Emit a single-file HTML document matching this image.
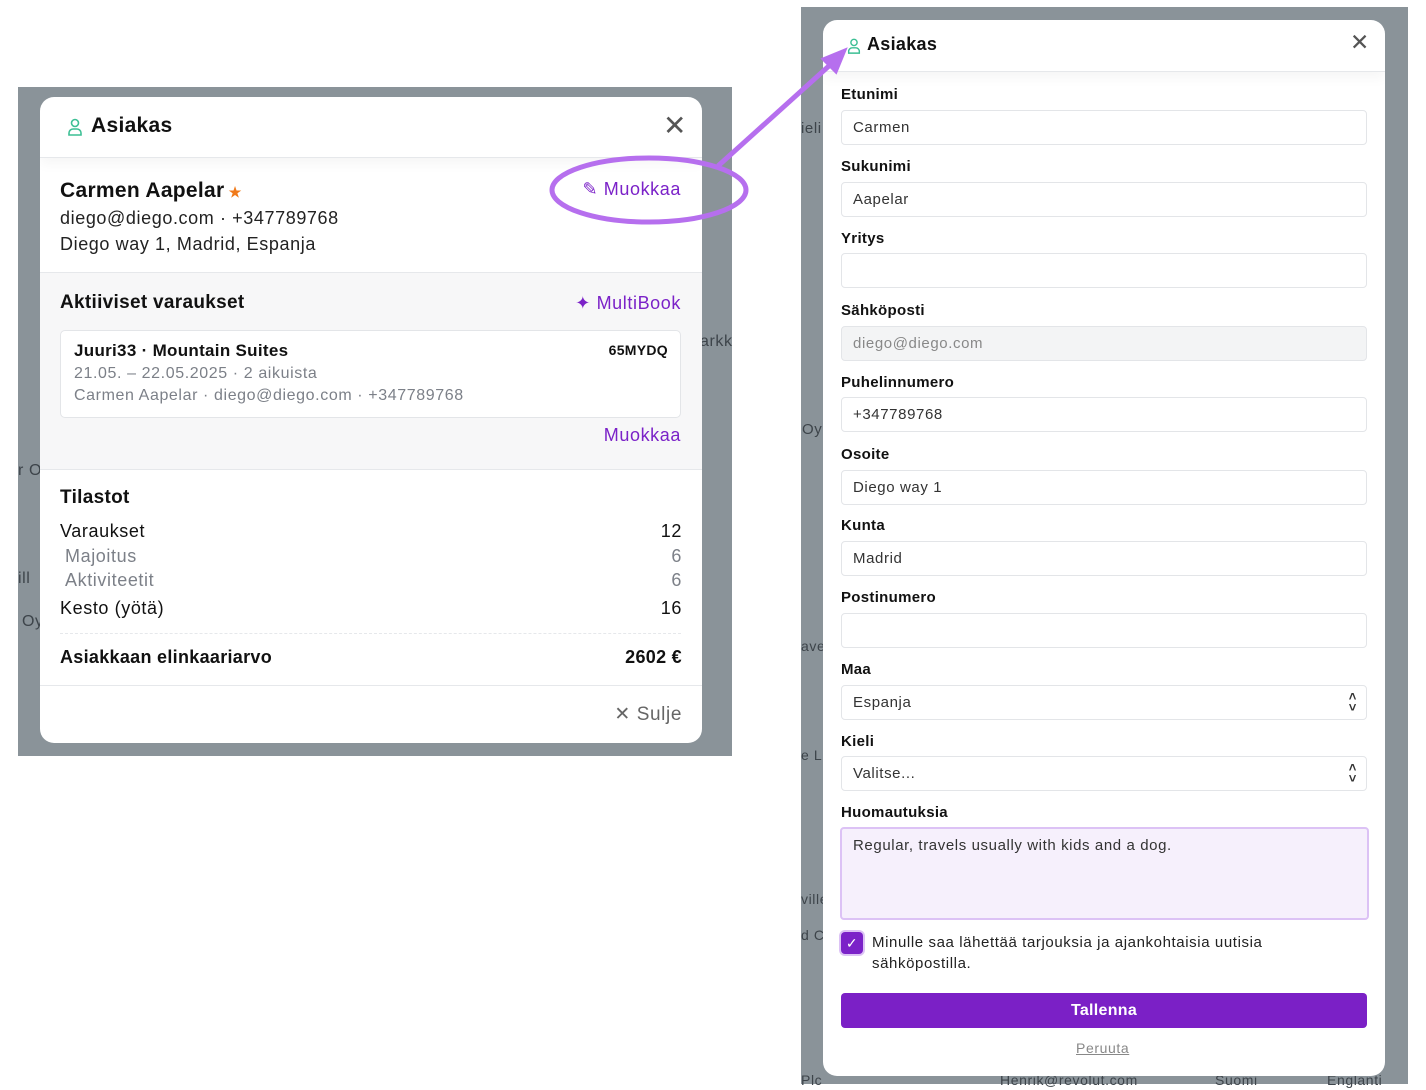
<!DOCTYPE html>
<html><head><meta charset="utf-8"><style>
*{box-sizing:border-box;margin:0;padding:0}
body{width:1426px;height:1090px;background:#fff;position:relative;overflow:hidden;font-family:"Liberation Sans",sans-serif;color:#111;letter-spacing:0.6px}
.a{position:absolute;white-space:nowrap}
.bg{position:absolute;background:#8a9399}
.modal{position:absolute;background:#fff;border-radius:14px;overflow:hidden}
.lbl{position:absolute;left:18px;font-size:15px;font-weight:bold;color:#111;letter-spacing:0.3px}
.inp{position:absolute;left:18px;width:526px;height:35px;border:1px solid #e3e5e8;border-radius:4px;font-size:15px;color:#333;padding:8px 11px;background:#fff}
.p{color:#7b22c8}
.g{color:#7c8088}
b,.bd{letter-spacing:0.3px}
</style></head><body>
<div class="bg" style="left:18px;top:87px;width:714px;height:669px"></div>
<div class="bg" style="left:801px;top:7px;width:607px;height:1077px"></div>
<div class="a" style="left:700px;top:333px;font-size:16px;color:#3d444a">arkk</div>
<div class="a" style="left:18px;top:462px;font-size:16px;color:#3d444a">r O</div>
<div class="a" style="left:18px;top:570px;font-size:16px;color:#3d444a">ill</div>
<div class="a" style="left:22px;top:613px;font-size:16px;color:#3d444a">Oy</div>
<div class="a" style="left:801px;top:120px;font-size:15px;color:#3d444a">ieli</div>
<div class="a" style="left:802px;top:421px;font-size:15px;color:#3d444a">Oy</div>
<div class="a" style="left:801px;top:638px;font-size:14px;color:#3d444a">ave</div>
<div class="a" style="left:801px;top:747px;font-size:14px;color:#3d444a">e L</div>
<div class="a" style="left:801px;top:891px;font-size:14px;color:#3d444a">ville</div>
<div class="a" style="left:801px;top:927px;font-size:14px;color:#3d444a">d C</div>
<div class="a" style="left:801px;top:1072px;font-size:14px;color:#3d444a">Plc</div>
<div class="a" style="left:1000px;top:1072px;font-size:14px;color:#3d444a">Henrik@revolut.com</div>
<div class="a" style="left:1215px;top:1072px;font-size:14px;color:#3d444a">Suomi</div>
<div class="a" style="left:1327px;top:1072px;font-size:14px;color:#3d444a">Englanti</div>

<div class="modal" style="left:40px;top:97px;width:662px;height:646px">
 <div style="position:absolute;left:0;top:0;width:662px;height:61px;border-bottom:1px solid #e6e8eb;box-shadow:0 6px 12px rgba(0,0,0,0.04)"></div>
 <svg class="a" style="left:26px;top:20px" width="18" height="20" viewBox="0 0 18 20" fill="none" stroke="#3cbf94" stroke-width="1.6"><circle cx="9" cy="6" r="3.5"/><path d="M3 18v-2a4 4 0 0 1 4-4h4a4 4 0 0 1 4 4v2z"/></svg>
 <div class="a bd" style="left:51px;top:17px;font-size:21px;font-weight:bold">Asiakas</div>
 <div class="a" style="left:623px;top:12px;font-size:28px;color:#555">✕</div>
 <div class="a bd" style="left:20px;top:82px;font-size:21px;font-weight:bold">Carmen Aapelar<span style="color:#f07a1a;font-size:14px"> ★</span></div>
 <div class="a" style="left:20px;top:111px;font-size:18px;color:#222">diego@diego.com · +347789768</div>
 <div class="a" style="left:20px;top:137px;font-size:18px;color:#222">Diego way 1, Madrid, Espanja</div>
 <div class="a p" style="right:21px;top:82px;font-size:18px">✎ Muokkaa</div>
 <div style="position:absolute;left:0;top:175px;width:662px;height:198px;background:#f7f7f8;border-top:1px solid #e6e8eb;border-bottom:1px solid #e6e8eb"></div>
 <div class="a bd" style="left:20px;top:195px;font-size:19px;font-weight:bold">Aktiiviset varaukset</div>
 <div class="a p" style="right:21px;top:196px;font-size:18px">✦ MultiBook</div>
 <div style="position:absolute;left:20px;top:233px;width:621px;height:88px;background:#fff;border:1px solid #e3e5e8;border-radius:5px"></div>
 <div class="a bd" style="left:34px;top:244px;font-size:17px;font-weight:bold">Juuri33 · Mountain Suites</div>
 <div class="a bd" style="right:34px;top:245px;font-size:14px;font-weight:bold">65MYDQ</div>
 <div class="a g" style="left:34px;top:268px;font-size:16px">21.05. – 22.05.2025 · 2 aikuista</div>
 <div class="a g" style="left:34px;top:290px;font-size:16px">Carmen Aapelar · diego@diego.com · +347789768</div>
 <div class="a p" style="right:21px;top:328px;font-size:18px">Muokkaa</div>
 <div class="a bd" style="left:20px;top:390px;font-size:19px;font-weight:bold">Tilastot</div>
 <div class="a" style="left:20px;top:424px;font-size:18px">Varaukset</div><div class="a" style="right:20px;top:424px;font-size:18px">12</div>
 <div class="a g" style="left:25px;top:449px;font-size:18px">Majoitus</div><div class="a g" style="right:20px;top:449px;font-size:18px">6</div>
 <div class="a g" style="left:25px;top:473px;font-size:18px">Aktiviteetit</div><div class="a g" style="right:20px;top:473px;font-size:18px">6</div>
 <div class="a" style="left:20px;top:501px;font-size:18px">Kesto (yötä)</div><div class="a" style="right:20px;top:501px;font-size:18px">16</div>
 <div style="position:absolute;left:20px;top:536px;width:621px;border-top:1px dashed #e6e8eb"></div>
 <div class="a bd" style="left:20px;top:550px;font-size:18px;font-weight:bold">Asiakkaan elinkaariarvo</div>
 <div class="a bd" style="right:20px;top:550px;font-size:18px;font-weight:bold">2602 €</div>
 <div style="position:absolute;left:0;top:588px;width:662px;border-top:1px solid #e6e8eb"></div>
 <div class="a" style="right:20px;top:606px;font-size:19px;color:#666">✕ Sulje</div>
</div>

<div class="modal" style="left:823px;top:20px;width:562px;height:1056px">
 <div style="position:absolute;left:0;top:0;width:562px;height:52px;border-bottom:1px solid #e6e8eb;box-shadow:0 6px 12px rgba(0,0,0,0.04)"></div>
 <svg class="a" style="left:23px;top:17px" width="16" height="18" viewBox="0 0 18 20" fill="none" stroke="#3cbf94" stroke-width="1.6"><circle cx="9" cy="6" r="3.5"/><path d="M3 18v-2a4 4 0 0 1 4-4h4a4 4 0 0 1 4 4v2z"/></svg>
 <div class="a bd" style="left:44px;top:14px;font-size:18px;font-weight:bold">Asiakas</div>
 <div class="a" style="left:527px;top:9px;font-size:23px;color:#555">✕</div>
 <div class="lbl" style="top:66px">Etunimi</div><div class="inp" style="top:90px">Carmen</div>
 <div class="lbl" style="top:138px">Sukunimi</div><div class="inp" style="top:162px">Aapelar</div>
 <div class="lbl" style="top:210px">Yritys</div><div class="inp" style="top:233px"></div>
 <div class="lbl" style="top:282px">Sähköposti</div><div class="inp" style="top:306px;background:#f3f4f5;color:#888">diego@diego.com</div>
 <div class="lbl" style="top:354px">Puhelinnumero</div><div class="inp" style="top:377px">+347789768</div>
 <div class="lbl" style="top:426px">Osoite</div><div class="inp" style="top:450px">Diego way 1</div>
 <div class="lbl" style="top:497px">Kunta</div><div class="inp" style="top:521px">Madrid</div>
 <div class="lbl" style="top:569px">Postinumero</div><div class="inp" style="top:593px"></div>
 <div class="lbl" style="top:641px">Maa</div><div class="inp" style="top:665px">Espanja<span style="position:absolute;right:9px;top:5px;font-size:13px;line-height:11px;font-weight:bold">˄<br>˅</span></div>
 <div class="lbl" style="top:713px">Kieli</div><div class="inp" style="top:736px">Valitse...<span style="position:absolute;right:9px;top:5px;font-size:13px;line-height:11px;font-weight:bold">˄<br>˅</span></div>
 <div class="lbl" style="top:784px">Huomautuksia</div>
 <div class="inp" style="top:807px;height:93px;left:17px;width:529px;background:#f6f0fc;border:2px solid #dcc2f5">Regular, travels usually with kids and a dog.</div>
 <div style="position:absolute;left:18px;top:912px;width:22px;height:22px;background:#7b22c8;border-radius:4px;box-shadow:0 0 0 2px #dcc2f5;color:#fff;font-size:14px;text-align:center;line-height:22px">✓</div>
 <div class="a" style="left:49px;top:912px;font-size:15px;color:#222;line-height:21px;white-space:normal;width:420px">Minulle saa lähettää tarjouksia ja ajankohtaisia uutisia sähköpostilla.</div>
 <div class="bd" style="position:absolute;left:18px;top:973px;width:526px;height:35px;background:#7b20c6;border-radius:4px;color:#fff;font-size:16px;font-weight:bold;text-align:center;line-height:35px">Tallenna</div>
 <div class="a" style="left:253px;top:1020px;font-size:14px;color:#888;text-decoration:underline">Peruuta</div>
</div>

<svg class="a" style="left:0;top:0" width="1426" height="1090" fill="none">
 <ellipse cx="649" cy="190" rx="97" ry="32" stroke="#b66fee" stroke-width="5"/>
 <path d="M718 166 L830 65" stroke="#b66fee" stroke-width="5"/>
 <path d="M845 50 L823 59 L836 72 Z" fill="#b66fee" stroke="#b66fee" stroke-width="3"/>
</svg>
</body></html>
